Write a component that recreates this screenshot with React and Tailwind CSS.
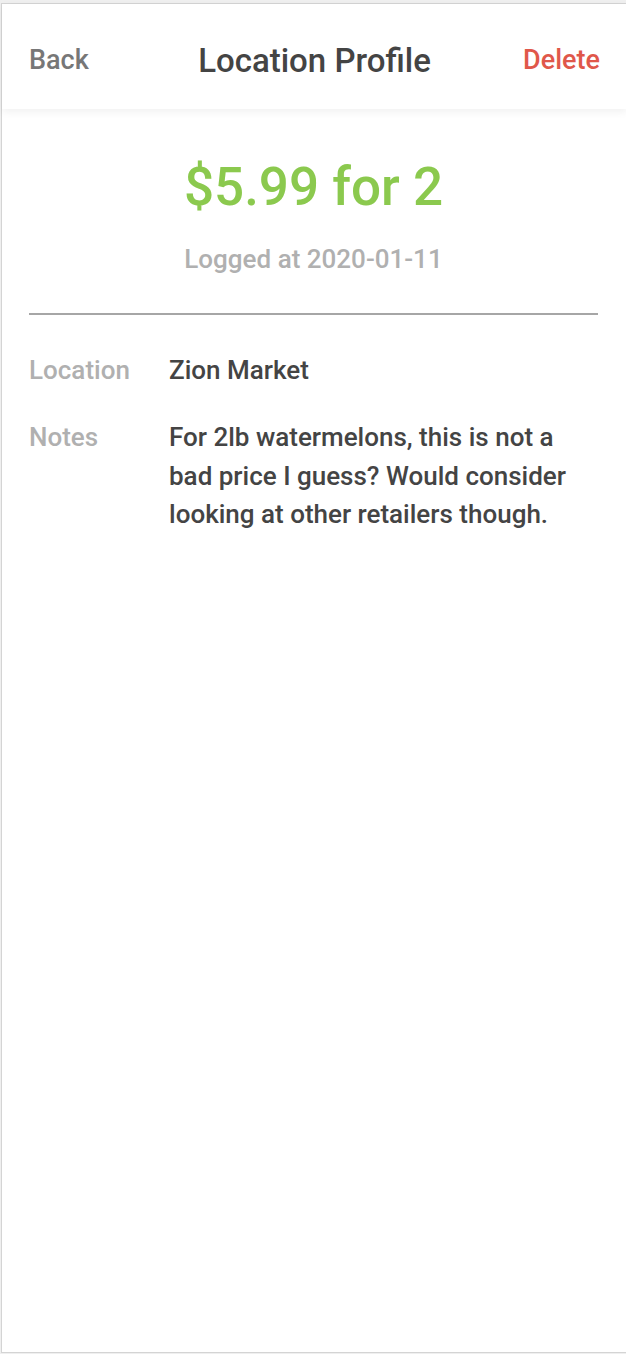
export default function App() {
  return (
    <div className="w-[626px] h-[1354px] overflow-hidden bg-[#efefef] pl-[1px] pt-[3px]" style={{ fontFamily: "Roboto, 'Liberation Sans', sans-serif" }}>
      <div className="w-[640px] h-[1350px] bg-white border border-[#d4d4d4] flex flex-col">
        <div className="h-[105px] w-[625px] flex items-center justify-between pt-[8px] px-[27px] bg-white shadow-[0_3px_8px_rgba(0,0,0,0.06)] relative">
          <span className="text-[27px] font-medium text-[#777777]">Back</span>
          <span className="text-[33px] font-medium text-[#444444] absolute left-0 right-0 top-[8px] bottom-0 flex items-center justify-center pointer-events-none">Location Profile</span>
          <span className="text-[27px] font-medium text-[#e0574a]">Delete</span>
        </div>
        <div className="w-[625px] pl-[27px] pr-[29px]">
          <div className="flex flex-col items-center pt-[52px]">
            <div className="text-[53px] leading-none font-medium text-[#8bc94e]">$5.99 for 2</div>
            <div className="mt-[26px] text-[26px] leading-[39px] font-medium text-[#b0b0b0]">Logged at 2020-01-11</div>
          </div>
          <div className="mt-[34px] border-t-2 border-[#a6a6a6]"></div>
          <div className="mt-[36px] flex">
            <div className="w-[140px] text-[26px] font-medium text-[#b0b0b0] leading-[38px]">Location</div>
            <div className="flex-1 text-[26px] font-medium text-[#444444] leading-[38px]">Zion Market</div>
          </div>
          <div className="mt-[29px] flex">
            <div className="w-[140px] text-[26px] font-medium text-[#b0b0b0] leading-[38px]">Notes</div>
            <div className="w-[420px] text-[26px] font-medium text-[#444444] leading-[38.5px]">For 2lb watermelons, this is not a bad price I guess? Would consider looking at other retailers though.</div>
          </div>
        </div>
      </div>
    </div>
  );
}
